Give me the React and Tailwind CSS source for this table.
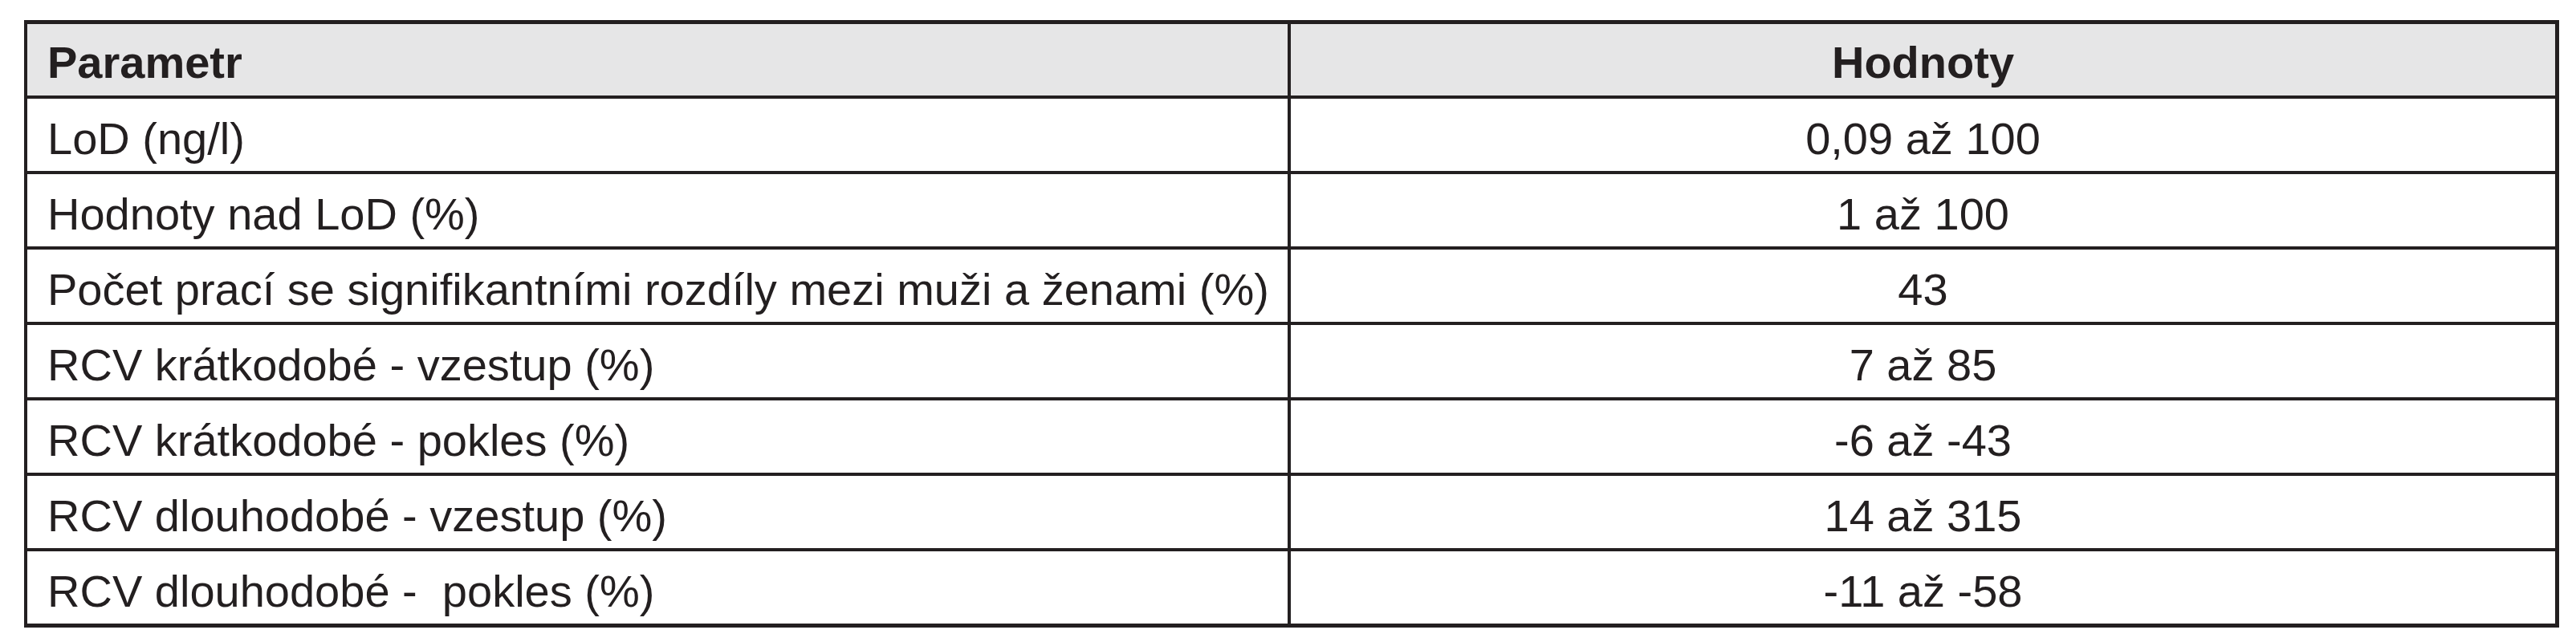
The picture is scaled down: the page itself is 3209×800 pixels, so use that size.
import React from 'react';

const rows = [
  ['LoD (ng/l)', '0,09 až 100'],
  ['Hodnoty nad LoD (%)', '1 až 100'],
  ['Počet prací se signifikantními rozdíly mezi muži a ženami (%)', '43'],
  ['RCV krátkodobé - vzestup (%)', '7 až 85'],
  ['RCV krátkodobé - pokles (%)', '-6 až -43'],
  ['RCV dlouhodobé - vzestup (%)', '14 až 315'],
  ['RCV dlouhodobé -  pokles (%)', '-11 až -58'],
];

const App = () => {
  return (
    <div className="w-[3209px] h-[800px] bg-white pt-[25px] pl-[30px] text-[#231f20] font-['Liberation_Sans',Arial,sans-serif]">
      <div className="w-[3158px] border-[#231f20] border-t-[5px] border-b-[5px] border-l-4 border-r-[5px]">
        {/* header */}
        <div className="flex h-[89px] bg-[#e6e6e7] font-bold text-[56px] leading-none">
          <div className="w-[1574px] pl-[25px] pt-[6px] flex items-center border-r-4 border-[#231f20]">
            Parametr
          </div>
          <div className="flex-1 pt-[6px] flex items-center justify-center">Hodnoty</div>
        </div>

        {rows.map(([name, value]) => (
          <div key={name} className="flex h-[94px] border-t-4 border-[#231f20] text-[56px] leading-none">
            <div className="w-[1574px] pl-[25px] pt-[10px] flex items-center border-r-4 border-[#231f20] whitespace-pre">
              {name}
            </div>
            <div className="flex-1 pt-[10px] flex items-center justify-center">{value}</div>
          </div>
        ))}
      </div>
    </div>
  );
};

export default App;
